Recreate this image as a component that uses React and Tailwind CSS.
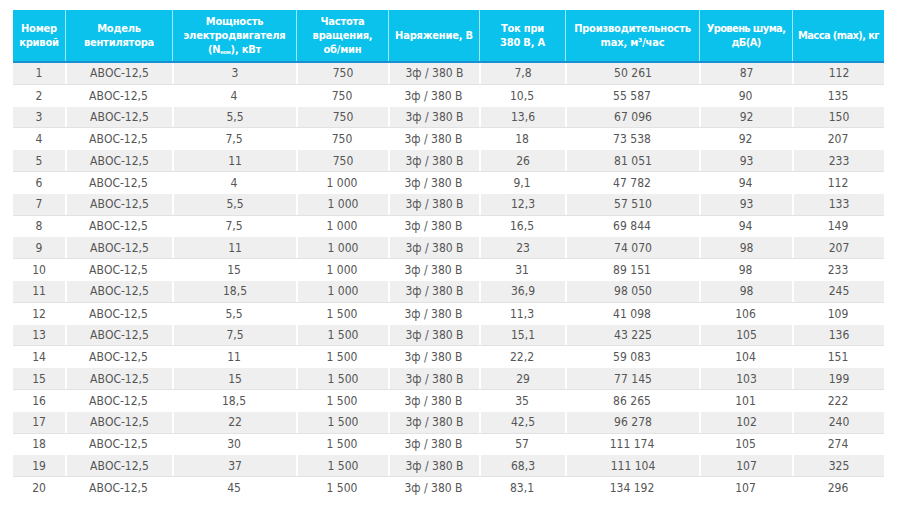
import React from 'react'

const rows = [
  ['1', '3', '750', '7,8', '50 261', '87', '112'],
  ['2', '4', '750', '10,5', '55 587', '90', '135'],
  ['3', '5,5', '750', '13,6', '67 096', '92', '150'],
  ['4', '7,5', '750', '18', '73 538', '92', '207'],
  ['5', '11', '750', '26', '81 051', '93', '233'],
  ['6', '4', '1 000', '9,1', '47 782', '94', '112'],
  ['7', '5,5', '1 000', '12,3', '57 510', '93', '133'],
  ['8', '7,5', '1 000', '16,5', '69 844', '94', '149'],
  ['9', '11', '1 000', '23', '74 070', '98', '207'],
  ['10', '15', '1 000', '31', '89 151', '98', '233'],
  ['11', '18,5', '1 000', '36,9', '98 050', '98', '245'],
  ['12', '5,5', '1 500', '11,3', '41 098', '106', '109'],
  ['13', '7,5', '1 500', '15,1', '43 225', '105', '136'],
  ['14', '11', '1 500', '22,2', '59 083', '104', '151'],
  ['15', '15', '1 500', '29', '77 145', '103', '199'],
  ['16', '18,5', '1 500', '35', '86 265', '101', '222'],
  ['17', '22', '1 500', '42,5', '96 278', '102', '240'],
  ['18', '30', '1 500', '57', '111 174', '105', '274'],
  ['19', '37', '1 500', '68,3', '111 104', '107', '325'],
  ['20', '45', '1 500', '83,1', '134 192', '107', '296'],
]

const cols = 'grid grid-cols-[52px_107px_124px_92px_91px_86px_134px_93px_92px]'

const Head = ({ children, first, tight }) => (
  <div className={`flex items-center justify-center text-center leading-[14px] whitespace-nowrap ${tight ? 'tracking-[-0.6px]' : ''} ${first ? '' : 'border-l border-white/60'}`}>
    <span>{children}</span>
  </div>
)

const App = () => {
  return (
    <div className="w-[900px] h-[506px] bg-white pt-[10px] pl-[13px]" style={{ fontFamily: '"DejaVu Sans Condensed", "Liberation Sans Narrow", "Liberation Sans", sans-serif' }}>
      <div className="w-[871px]">
        {/* header */}
        <div className={`${cols} h-[53px] bg-[#0bc2ec] border-b-2 border-[#1c8fcf] text-white font-bold text-[11px] tracking-[-0.2px]`}>
          <Head first>Номер<br />кривой</Head>
          <Head>Модель<br />вентилятора</Head>
          <Head>Мощность<br />электродвигателя<br />(N<sub className="text-[5.5px] align-baseline">ном</sub>), кВт</Head>
          <Head>Частота<br />вращения,<br />об/мин</Head>
          <Head>Наряжение, В</Head>
          <Head>Ток при<br />380 В, А</Head>
          <Head>Производительность<br />max, м³/час</Head>
          <Head tight>Уровень шума,<br />дБ(А)</Head>
          <Head tight>Масса (max), кг</Head>
        </div>

        {rows.map((r, i) => {
          const cells = [r[0], 'АВОС-12,5', r[1], r[2], '3ф / 380 В', r[3], r[4], r[5], r[6]]
          const gray = i % 2 === 0
          return (
            <div key={i} className={`${cols} h-[21.8px] text-[#555] text-[12px] ${gray ? 'border-b border-[#e2e2e2]' : ''}`}>
              {cells.map((c, j) => (
                <div
                  key={j}
                  className={`flex items-center justify-center ${gray ? 'bg-[#efefef]' : 'bg-white'} ${gray && j > 0 ? 'border-l-2 border-white' : ''}`}
                >
                  {c}
                </div>
              ))}
            </div>
          )
        })}
      </div>
    </div>
  )
}

export default App
